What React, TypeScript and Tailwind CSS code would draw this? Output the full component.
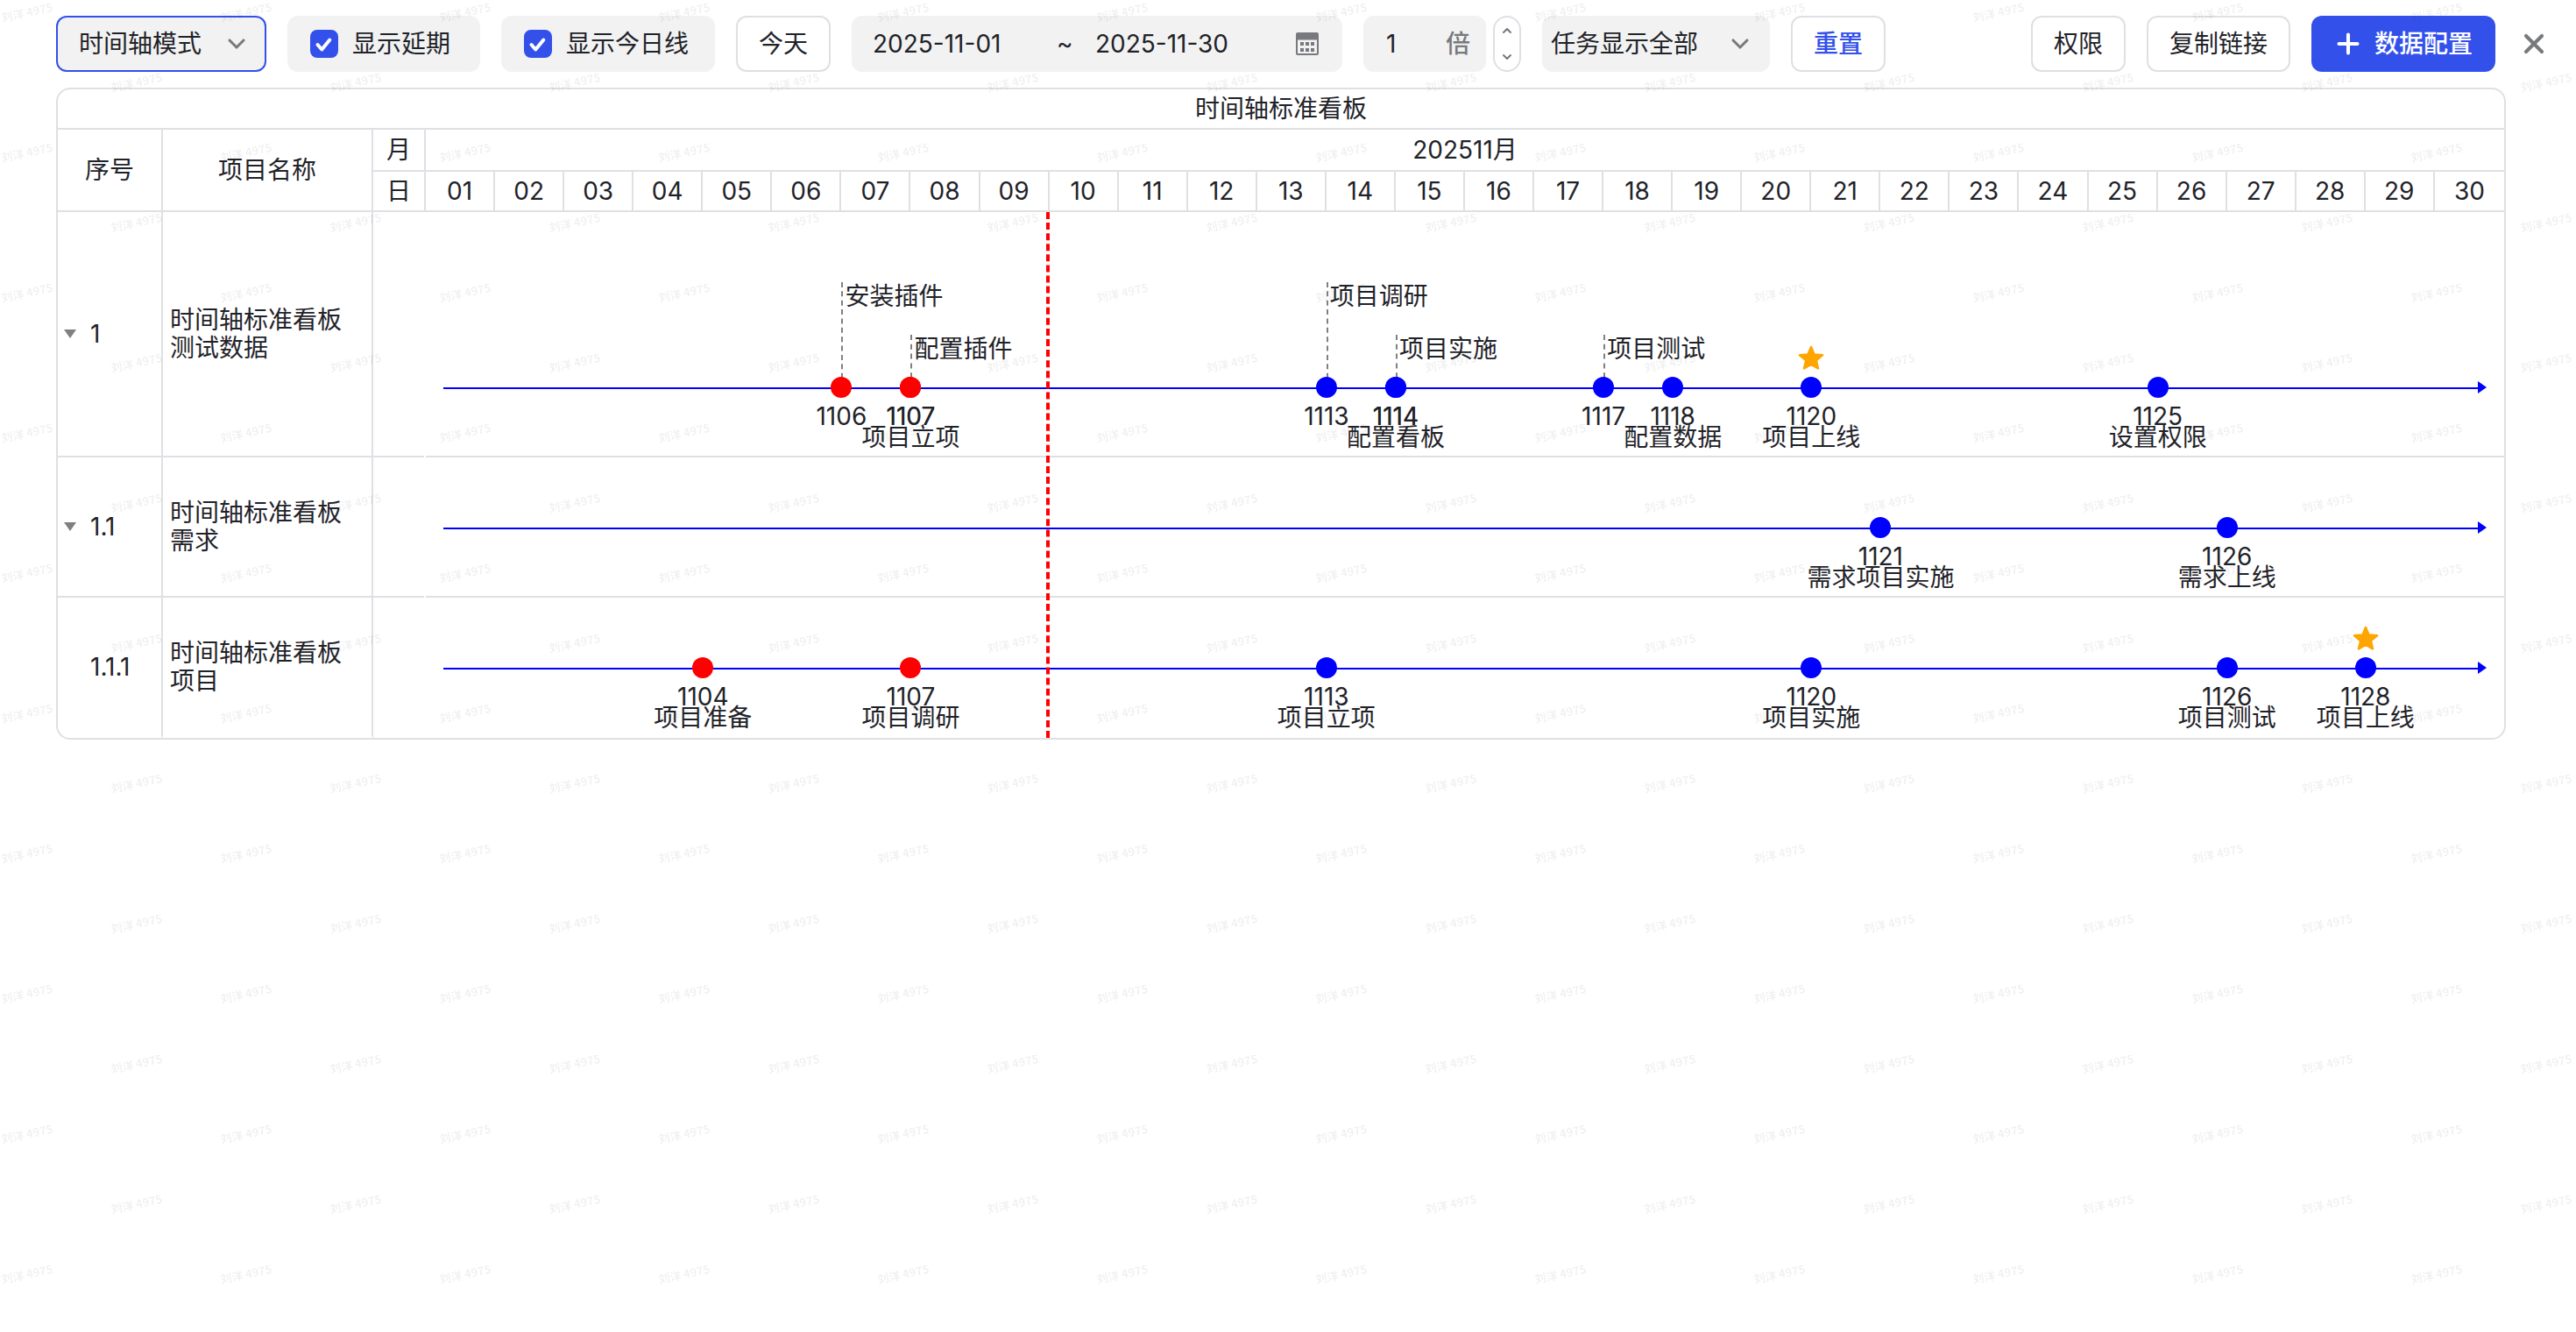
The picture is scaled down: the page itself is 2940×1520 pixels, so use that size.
import { useState } from "react";
import { ChevronDown, ChevronUp, Plus, X } from "lucide-react";

type Milestone = {
  day: number;
  name: string;
  // 0 = label under the axis, 1 / 2 = flag raised above it
  level?: number;
  late?: boolean;
  star?: boolean;
};

type Project = {
  no: string;
  name: string;
  expandable?: boolean;
  tall?: boolean;
  milestones: Milestone[];
};

const DAYS = Array.from({ length: 30 }, (_, i) => i + 1);
const TODAY = 9;

const projects: Project[] = [
  {
    no: "1",
    name: "时间轴标准看板测试数据",
    expandable: true,
    tall: true,
    milestones: [
      { day: 6, name: "安装插件", level: 2, late: true },
      { day: 7, name: "配置插件", level: 1, late: true },
      { day: 7, name: "项目立项", late: true },
      { day: 13, name: "项目调研", level: 2 },
      { day: 14, name: "项目实施", level: 1 },
      { day: 14, name: "配置看板" },
      { day: 17, name: "项目测试", level: 1 },
      { day: 18, name: "配置数据" },
      { day: 20, name: "项目上线", star: true },
      { day: 25, name: "设置权限" },
    ],
  },
  {
    no: "1.1",
    name: "时间轴标准看板需求",
    expandable: true,
    milestones: [
      { day: 21, name: "需求项目实施" },
      { day: 26, name: "需求上线" },
    ],
  },
  {
    no: "1.1.1",
    name: "时间轴标准看板项目",
    milestones: [
      { day: 4, name: "项目准备", late: true },
      { day: 7, name: "项目调研", late: true },
      { day: 13, name: "项目立项" },
      { day: 20, name: "项目实施" },
      { day: 26, name: "项目测试" },
      { day: 28, name: "项目上线", star: true },
    ],
  },
];

const pad = (n: number) => String(n).padStart(2, "0");
const dayEnd = (day: number) => `${(day / 30) * 100}%`;

const CalendarIcon = () => (
  <svg viewBox="0 0 28 28" className="size-7 shrink-0" aria-hidden="true">
    <path
      fillRule="evenodd"
      fill="#77797d"
      d="M3 1h22a2 2 0 0 1 2 2v22a2 2 0 0 1-2 2H3a2 2 0 0 1-2-2V3a2 2 0 0 1 2-2zM3 9.500V25h22V9.500z"
    />
    <g fill="#77797d">
      <path d="M6 12h4v4H6zM12 12h4v4h-4zM18 12h4v4h-4zM6 19h4v4H6zM12 19h4v4h-4zM18 19h4v4h-4z" />
    </g>
  </svg>
);

const SelectBox = ({ label, options, className, selectClass }: { label: string; options: string[]; className: string; selectClass: string }) => (
  <div className={`relative h-16 shrink-0 ${className}`}>
    <select
      aria-label={label}
      className={`size-full appearance-none rounded-xl bg-[#f2f2f2] outline-none ${selectClass}`}
    >
      {options.map((o) => (
        <option key={o}>{o}</option>
      ))}
    </select>
    <ChevronDown className="pointer-events-none absolute top-4 right-[18px] size-8 text-[#77797d]" strokeWidth={2.3} />
  </div>
);

const CheckBox = ({ label, className }: { label: string; className: string }) => {
  const [checked, setChecked] = useState(true);

  return (
    <label className={`flex h-16 shrink-0 items-center gap-4 rounded-xl bg-[#f2f2f2] pl-[26px] ${className}`}>
      <span className="relative size-8">
        <input
          type="checkbox"
          checked={checked}
          onChange={(e) => setChecked(e.target.checked)}
          className="block size-8 appearance-none rounded-lg border-2 border-[#3350eb] bg-white checked:bg-[#3350eb]"
        />
        {checked && (
          <svg viewBox="0 0 32 32" className="pointer-events-none absolute inset-0 size-8" fill="none" stroke="#fff" strokeWidth="4" strokeLinecap="round" strokeLinejoin="round">
            <path d="M8.500 17l4.800 5.500L22.300 11.500" />
          </svg>
        )}
      </span>
      {label}
    </label>
  );
};

const Toolbar = () => {
  const [start, setStart] = useState("2025-11-01");
  const [end, setEnd] = useState("2025-11-30");
  const [scale, setScale] = useState(1);
  const outline = "h-16 shrink-0 rounded-xl border-2 border-[#dee0e3] bg-white px-6";

  return (
    <header className="flex items-center gap-6 pt-[18px] pr-[30px] pb-[18px] pl-16">
      <SelectBox label="模式" options={["时间轴模式"]} className="w-60" selectClass="border-2 border-[#3350eb] pl-6" />
      <CheckBox label="显示延期" className="w-[220px]" />
      <CheckBox label="显示今日线" className="w-[244px]" />
      <button className={outline}>今天</button>

      <div className="flex h-16 w-[560px] shrink-0 items-center rounded-xl bg-[#f2f2f2] pr-[26px] pl-6">
        <input aria-label="开始日期" value={start} onChange={(e) => setStart(e.target.value)} className="w-[210px] bg-transparent outline-none" />
        <span className="w-11">~</span>
        <input aria-label="结束日期" value={end} onChange={(e) => setEnd(e.target.value)} className="w-[210px] bg-transparent outline-none" />
        <button aria-label="选择日期" className="ml-auto">
          <CalendarIcon />
        </button>
      </div>

      <div className="flex shrink-0 gap-2">
        <label className="flex h-16 w-[140px] items-center justify-between rounded-xl bg-[#f2f2f2] pr-[18px] pl-[26px]">
          <input aria-label="倍数" value={scale} onChange={(e) => setScale(Number(e.target.value) || 1)} className="w-14 bg-transparent outline-none" />
          <span className="font-medium text-[#77797d]">倍</span>
        </label>
        <div className="flex h-16 w-8 flex-col items-center justify-between rounded-2xl border-2 border-[#dee0e3] py-[7px] text-[#77797d]">
          <button aria-label="增加" onClick={() => setScale(scale + 1)}>
            <ChevronUp className="size-4" strokeWidth={3} />
          </button>
          <button aria-label="减少" onClick={() => setScale(Math.max(1, scale - 1))}>
            <ChevronDown className="size-4" strokeWidth={3} />
          </button>
        </div>
      </div>

      <SelectBox label="任务显示" options={["任务显示全部"]} className="w-[260px]" selectClass="pl-[10px]" />
      <button className={`${outline} font-medium text-[#3350eb]`}>重置</button>

      <div className="ml-auto flex items-center gap-6">
        <button className={outline}>权限</button>
        <button className={outline}>复制链接</button>
        <button className="flex h-16 shrink-0 items-center gap-3 rounded-xl bg-[#3350eb] pr-[26px] pl-6 font-medium text-white">
          <Plus className="size-9" strokeWidth={2.7} />
          数据配置
        </button>
        <button aria-label="关闭" className="ml-[2px] text-[#77797d]">
          <X className="size-9" strokeWidth={2.7} />
        </button>
      </div>
    </header>
  );
};

const Star = () => (
  <svg
    viewBox="0 0 30 28"
    className="absolute -top-12 left-1/2 h-7 w-[30px] -translate-x-1/2"
    fill="#ffa500"
    stroke="#ffa500"
    strokeWidth="2.500"
    strokeLinejoin="round"
  >
    <path d="M15 2L18.600 10.600L28 11.300L20.800 17.400L23 26.400L15 21.600L7 26.400L9.200 17.400L2 11.300L11.400 10.600Z" />
  </svg>
);

const Marker = ({ item }: { item: Milestone }) => {
  const { level = 0 } = item;

  return (
    <div className="absolute bottom-[78px] w-0" style={{ left: dayEnd(item.day) }}>
      {level > 0 && (
        <div
          className={`absolute bottom-0 left-0 border-l-2 border-dashed border-[#808080] pl-[2px] leading-8 whitespace-nowrap ${level === 2 ? "h-[120px]" : "h-[60px]"}`}
        >
          {item.name}
        </div>
      )}
      <div className={`absolute -top-3 -left-3 size-6 rounded-full ${item.late ? "bg-[#ff0000]" : "bg-[#0000ff]"}`} />
      {item.star && <Star />}
      <div className="absolute top-[21px] left-0 flex -translate-x-1/2 flex-col items-center leading-6 whitespace-nowrap">
        <span>11{pad(item.day)}</span>
        {level === 0 && <span>{item.name}</span>}
      </div>
    </div>
  );
};

const Axis = () => (
  <div className="absolute right-[20px] bottom-[71px] left-[20px] flex h-[14px] items-center">
    <div className="mt-[2px] h-[2px] flex-1 bg-[#0000ff]" />
    <div className="border-y-[7px] border-l-[10px] border-y-transparent border-l-[#0000ff]" />
  </div>
);

const Board = () => (
  <main className="relative mr-20 ml-16 overflow-hidden rounded-2xl border-2 border-[#dee0e3]">
    <table className="w-full table-fixed border-separate border-spacing-0">
      <colgroup>
        <col className="w-[120px]" />
        <col className="w-[240px]" />
        <col className="w-[60px]" />
        {DAYS.map((d) => (
          <col key={d} />
        ))}
      </colgroup>
      <thead className="[&_th]:border-[#dee0e3] [&_th]:p-0 [&_th]:font-normal">
        <tr className="h-[46px]">
          <th colSpan={33} className="border-b-2">时间轴标准看板</th>
        </tr>
        <tr className="h-12">
          <th rowSpan={2} className="border-r-2 border-b-2">序号</th>
          <th rowSpan={2} className="border-r-2 border-b-2">项目名称</th>
          <th className="border-r-2 border-b-2">月</th>
          <th colSpan={30} className="border-b-2">202511月</th>
        </tr>
        <tr className="h-[46px]">
          <th className="border-r-2 border-b-2">日</th>
          {DAYS.map((d) => (
            <th key={d} className="border-r-2 border-b-2 last:border-r-0">{pad(d)}</th>
          ))}
        </tr>
      </thead>
      <tbody className="[&_td]:border-b-2 [&_td]:border-[#dee0e3] [&_td]:p-0 [&>tr:last-child>td]:border-b-white">
        {projects.map((p) => (
          <tr key={p.no} className={p.tall ? "h-[280px]" : "h-40"}>
            <td className="border-r-2">
              <div className="flex items-center pl-[7px]">
                <div className="w-[30px]">
                  {p.expandable && (
                    <button aria-label="收起" className="block border-x-[7px] border-t-[10px] border-x-transparent border-t-[#808080]" />
                  )}
                </div>
                {p.no}
              </div>
            </td>
            <td className="border-r-2">
              <div className="px-2 leading-8">{p.name}</div>
            </td>
            <td className="relative after:absolute after:right-0 after:-bottom-[2px] after:size-[2px] after:bg-white" />
            <td colSpan={30} className="relative">
              <Axis />
              {p.milestones.map((m) => (
                <Marker key={m.day + m.name} item={m} />
              ))}
            </td>
          </tr>
        ))}
      </tbody>
    </table>

    {/* today line, spans the body rows only */}
    <div className="pointer-events-none absolute top-[140px] right-0 bottom-0 left-[420px]">
      <div className="absolute inset-y-0 -translate-x-full border-l-4 border-dashed border-[#ff0000]" style={{ left: dayEnd(TODAY) }} />
    </div>
  </main>
);

const Watermark = () => (
  <div
    className="pointer-events-none absolute inset-0 overflow-hidden font-['Noto_Sans_CJK_SC',sans-serif] text-[13px] leading-5 font-bold text-[#1f2329]/8 select-none"
    aria-hidden="true"
  >
    {Array.from({ length: 19 }, (_, row) => (
      <div key={row} className={`flex h-20 ${row % 2 ? "pl-[126px]" : "pl-[1px]"}`}>
        {Array.from({ length: 12 }, (_, col) => (
          <div key={col} className="w-[250px] shrink-0 pt-1">
            <span className="inline-block -rotate-12 whitespace-nowrap">刘洋 4975</span>
          </div>
        ))}
      </div>
    ))}
  </div>
);

const App = () => (
  <div className="relative min-h-screen overflow-hidden bg-white font-['Inter','Noto_Sans_CJK_SC',sans-serif] text-[28px] text-[#1f2329]">
    <Toolbar />
    <Board />
    <Watermark />
  </div>
);

export default App;
